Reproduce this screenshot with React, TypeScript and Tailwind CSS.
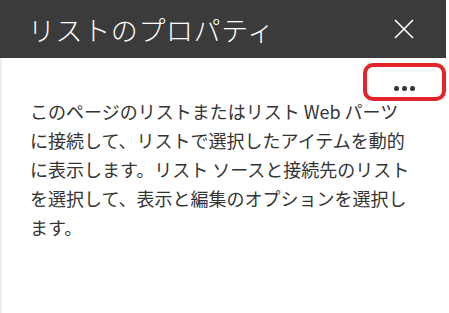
import React from "react";

const jp = { fontFamily: '"Noto Sans CJK JP", "Noto Sans", sans-serif' };

export default function App() {
  return (
    <div className="w-[449px] h-[313px] bg-white overflow-hidden" style={jp}>
      <div className="w-[444px] h-[313px] flex flex-col border-l-2 border-[#ececec]">
        <div className="h-[58px] bg-[#3b3b3b] flex items-center justify-between pl-[28px] pr-[26px] -ml-[2px] w-[446px]">
          <span className="text-white text-[27px] font-light tracking-[0.6px] leading-none">リストのプロパティ</span>
          <svg width="22" height="22" viewBox="0 0 22 22" className="mr-[5px]">
            <path d="M2 2 L20 20 M20 2 L2 20" stroke="white" strokeWidth="1.6" fill="none" />
          </svg>
        </div>
        <div className="flex justify-end pt-[5px] -mr-[2px]">
          <div className="w-[83px] h-[38px] border-[4px] border-[#e3242b] rounded-[10px] flex items-end justify-center pb-[6px] gap-[3px]">
            <span className="w-[5px] h-[5px] rounded-full bg-[#333]" />
            <span className="w-[5px] h-[5px] rounded-full bg-[#333]" />
            <span className="w-[5px] h-[5px] rounded-full bg-[#333]" />
          </div>
        </div>
        <div className="pl-[28px] -mt-[4px] text-[18px] leading-[29px] text-[#333]">
          <div>このページのリストまたはリスト Web パーツ</div>
          <div>に接続して、リストで選択したアイテムを動的</div>
          <div>に表示します。リスト ソースと接続先のリスト</div>
          <div>を選択して、表示と編集のオプションを選択し</div>
          <div>ます。</div>
        </div>
      </div>
    </div>
  );
}
